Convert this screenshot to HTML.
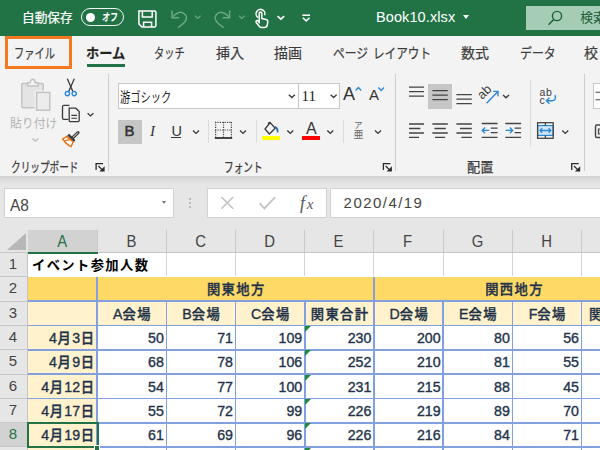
<!DOCTYPE html>
<html lang="ja">
<head>
<meta charset="utf-8">
<title>Book10.xlsx</title>
<style>
html,body{margin:0;padding:0;}
body{width:600px;height:450px;overflow:hidden;position:relative;background:#e6e6e6;
  font-family:"Liberation Sans","Noto Sans CJK JP",sans-serif;color:#444;}
.a{position:absolute;}
.t{position:absolute;white-space:nowrap;line-height:1;transform-origin:0 0;}
.k{display:inline-block;transform-origin:0 50%;}
#title{left:0;top:0;width:600px;height:35.6px;background:#217346;}
#ribbon{left:0;top:35.6px;width:600px;height:140.4px;background:#f3f3f3;}
#shadow{left:0;top:176px;width:600px;height:8px;background:linear-gradient(#cfcfcf,#dcdcdc 40%,#e6e6e6);}
.tab{font-size:14px;color:#3c3c3c;top:46.3px;-webkit-text-stroke:.2px #3c3c3c;}
.gl{font-size:13.2px;color:#3c3c3c;top:161px;-webkit-text-stroke:.25px #3c3c3c;}
.vsep{position:absolute;width:1.2px;background:#cdcdcd;}
.box{position:absolute;background:#fff;border:1px solid #c6c6c6;box-sizing:border-box;}
svg{position:absolute;overflow:visible;}
/* grid */
#grid{left:0;top:229px;width:600px;height:221px;background:#fff;}
.ch{position:absolute;top:229px;height:24px;transform:scaleX(.92);transform-origin:50% 50%;font-size:16.2px;color:#444;text-align:center;line-height:24px;box-sizing:border-box;}
.rh{position:absolute;left:0;width:28px;height:24px;font-size:15px;color:#444;text-align:center;line-height:24px;box-sizing:border-box;padding-right:2px;}
.c{position:absolute;height:24px;box-sizing:border-box;font-size:13.3px;letter-spacing:1.37px;line-height:27.4px;color:#22324a;font-weight:500;-webkit-text-stroke:0.35px #22324a;white-space:nowrap;}
.d{letter-spacing:0;font-size:14.2px;}
.dt .d{margin-right:.6px;}
.n{text-align:right;padding-right:2px;}
.m{text-align:center;padding-left:2.6px;}
.hl{position:absolute;height:1.6px;background:#829fe0;margin-top:-.15px;}
.vl{position:absolute;width:1.6px;background:#829fe0;margin-left:-.15px;}
.gh{position:absolute;height:1px;background:#d4d4d4;}
.gv{position:absolute;width:1px;background:#d4d4d4;}
.tri{position:absolute;width:0;height:0;border-top:6px solid #1e8a3c;border-right:6px solid transparent;}
</style>
</head>
<body>
<div id="title" class="a"></div>
<div id="ribbon" class="a"></div>
<div id="shadow" class="a"></div>

<!-- TITLE BAR -->
<div class="t" style="left:22px;top:11.5px;font-size:12.7px;color:#fff;-webkit-text-stroke:.2px #fff;">自動保存</div>
<div class="a" style="left:81px;top:7.8px;width:40.8px;height:15.8px;border:1.2px solid #f0f6f2;border-radius:10px;box-sizing:content-box;"></div>
<div class="a" style="left:86px;top:12.5px;width:9.2px;height:9.2px;border-radius:50%;background:#fff;"></div>
<div class="t" style="left:102px;top:11.7px;font-size:11px;color:#fff;font-weight:700;"><span class="k" style="transform:scaleX(.72) skewX(-8deg)">オフ</span></div>
<div class="t" style="left:376px;top:10px;font-size:14.5px;color:#fff;letter-spacing:.1px;">Book10.xlsx</div>
<div class="a" style="left:463px;top:15px;width:0;height:0;border-left:3.5px solid transparent;border-right:3.5px solid transparent;border-top:4px solid #fff;"></div>
<div class="a" style="left:525.8px;top:5.7px;width:75px;height:24.8px;background:#a5cdb5;"></div>
<div class="t" style="left:580.3px;top:11.6px;font-size:12.8px;color:#1d5c38;">検索</div>

<!-- TABS -->
<div class="a" style="left:5px;top:36px;width:61px;height:27px;border:3px solid #f47920;"></div>
<div class="t tab" style="left:14px;"><span class="k" style="transform:scaleX(.73)">ファイル</span></div>
<div class="t tab" style="left:86px;font-weight:700;color:#222;"><span class="k" style="transform:scaleX(.945)">ホーム</span></div>
<div class="a" style="left:87px;top:63.5px;width:38px;height:3px;background:#217346;"></div>
<div class="t tab" style="left:154px;"><span class="k" style="transform:scaleX(.73)">タッチ</span></div>
<div class="t tab" style="left:216px;">挿入</div>
<div class="t tab" style="left:274px;">描画</div>
<div class="t tab" style="left:333px;"><span class="k" style="transform:scaleX(.84)">ページ</span></div>
<div class="t tab" style="left:373px;"><span class="k" style="transform:scaleX(.83)">レイアウト</span></div>
<div class="t tab" style="left:461px;">数式</div>
<div class="t tab" style="left:520px;"><span class="k" style="transform:scaleX(.85)">データ</span></div>
<div class="t tab" style="left:584px;width:14.2px;overflow:hidden;">校閲</div>

<!-- RIBBON GROUP LABELS -->
<div class="t gl" style="left:11px;"><span class="k" style="transform:scaleX(.73)">クリップボード</span></div>
<div class="t gl" style="left:224px;"><span class="k" style="transform:scaleX(.73)">フォント</span></div>
<div class="t gl" style="left:467px;">配置</div>
<div class="vsep" style="left:108px;top:74px;height:97px;"></div>
<div class="vsep" style="left:395px;top:74px;height:97px;"></div>
<div class="vsep" style="left:584px;top:74px;height:97px;"></div>
<div class="vsep" style="left:208px;top:120px;height:23px;background:#dcdcdc;"></div>
<div class="vsep" style="left:256px;top:120px;height:23px;background:#dcdcdc;"></div>
<div class="vsep" style="left:343px;top:120px;height:23px;background:#dcdcdc;"></div>
<div class="vsep" style="left:530px;top:80px;height:67px;background:#dcdcdc;"></div>

<!-- CLIPBOARD -->
<div class="t" style="left:10px;top:117.8px;font-size:12.5px;color:#b4b4b4;"><span class="k" style="transform:scaleX(.945)">貼り付け</span></div>

<!-- FONT GROUP -->
<div class="box" style="left:118px;top:83px;width:181px;height:26px;"></div>
<div class="box" style="left:298px;top:83px;width:42px;height:26px;"></div>
<div class="t" style="left:120px;top:90.5px;font-size:13.5px;color:#222;"><span class="k" style="transform:scaleX(.76)">游ゴシック</span></div>
<div class="t" style="left:301.5px;top:89px;font-size:15px;color:#222;font-family:'Liberation Serif',serif;">11</div>
<div class="a" style="left:118px;top:120px;width:24px;height:24px;background:#c6c6c6;"></div>
<div class="t" style="left:124.6px;top:122.5px;font-size:15px;color:#333;-webkit-text-stroke:.5px #333;">B</div>
<div class="t" style="left:150px;top:124px;font-size:15px;color:#333;font-style:italic;font-family:'Liberation Serif',serif;">I</div>
<div class="t" style="left:171.5px;top:124px;font-size:14.5px;color:#333;">U</div>
<div class="a" style="left:171px;top:137px;width:10px;height:1.3px;background:#333;"></div>
<div class="t" style="left:343px;top:85px;font-size:18px;color:#333;">A</div>
<div class="t" style="left:369px;top:87.3px;font-size:15px;color:#333;">A</div>
<div class="t" style="left:306px;top:120.5px;font-size:16px;color:#333;">A</div>
<div class="a" style="left:302px;top:136px;width:18px;height:4px;background:#f00;"></div>
<div class="a" style="left:262px;top:136px;width:18px;height:4px;background:#ff0;"></div>
<div class="t" style="left:354px;top:121px;font-size:8.5px;color:#666;">ア</div>
<div class="t" style="left:353.5px;top:130px;font-size:10px;color:#666;">亜</div>

<!-- ALIGN GROUP -->
<div class="a" style="left:428px;top:84px;width:24px;height:25px;background:#c6c6c6;"></div>
<div class="box" style="left:593px;top:83px;width:20px;height:26px;"></div>

<!-- FORMULA BAR -->
<div class="box" style="left:4px;top:187.6px;width:170px;height:30.6px;border-color:#d2d2d2;"></div>
<div class="t" style="left:10px;top:197px;font-size:16.5px;color:#444;"><span class="k" style="transform:scaleX(.94)">A8</span></div>
<div class="a" style="left:161.5px;top:201px;width:0;height:0;border-left:2.5px solid transparent;border-right:2.5px solid transparent;border-top:3px solid #777;"></div>
<div class="a" style="left:188.5px;top:198px;width:2px;height:2px;background:#bbb;box-shadow:0 4px 0 #bbb,0 8px 0 #bbb;"></div>
<div class="box" style="left:207px;top:187.6px;width:120px;height:30.6px;border-color:#d2d2d2;"></div>
<div class="box" style="left:330px;top:187.6px;width:280px;height:30.6px;border-color:#d2d2d2;"></div>
<div class="t" style="left:343.6px;top:195px;font-size:15px;color:#444;letter-spacing:1.45px;">2020/4/19</div>
<div class="t" style="left:300px;top:193.5px;font-size:18px;color:#555;font-style:italic;font-family:'Liberation Serif',serif;letter-spacing:1.8px;">f<span style="font-size:15px;">x</span></div>

<!-- GRID -->
<svg style="left:0;top:0" width="600" height="450" viewBox="0 0 600 450" fill="none" stroke-linecap="butt" stroke-linejoin="miter">
<!-- title bar icons -->
<g stroke="#fff" stroke-width="1.4">
  <path d="M138.9 10.9h15.7q1.3 0 1.3 1.3v13.4q0 1.3-1.3 1.3h-12.8l-2.9-2.9z" stroke-width="1.5"/>
  <path d="M142.4 10.9v6.2h9.8v-6.2" stroke-width="1.5"/>
  <path d="M143.6 26.9v-4.7h8v4.7" stroke-width="1.5"/>
</g>
<g stroke="#6ba686" stroke-width="1.5">
  <path d="M172 10.5v7.2h7.2"/>
  <path d="M172.6 17.2c3-4.6 8.4-6.4 12-3.2c3.4 3.2 1.6 7.4-2 10.2l-4.6 3.4"/>
  <path d="M229.6 10.5v7.2h-7.2"/>
  <path d="M229 17.2c-3-4.6-8.4-6.4-12-3.2c-3.4 3.2-1.6 7.4 2 10.2l4.6 3.4"/>
  <path d="M195 15.8l2.8 2.6l2.8-2.6" stroke-width="1.3"/>
  <path d="M239 15.8l2.8 2.6l2.8-2.6" stroke-width="1.3"/>
</g>
<g stroke="#fff" stroke-width="1.4">
  <path d="M258.3 17.6A4.4 4.4 0 1 1 264.6 15.3" stroke-width="1.5"/>
  <path d="M259.2 22.8V13.2a1.3 1.3 0 0 1 2.6 0V18.6l4.2.9q2 .5 1.8 2.4l-.5 3q-.4 2.6-3 2.6h-2.6q-1.6 0-2.5-1.2l-3-3.8q-.7-1.1.3-1.8q1-.5 1.8.4z" stroke-width="1.5" stroke-linejoin="round"/>
  <path d="M277.6 16.2l3.3 3l3.3-3" stroke-width="1.6"/>
  <path d="M302.3 15.2h7.8" stroke-width="1.5"/>
  <path d="M302.8 17.8l3.4 3.1l3.4-3.1" stroke-width="1.5"/>
</g>
<g stroke="#1d5c38" stroke-width="1.4">
  <circle cx="557" cy="16" r="4.6"/>
  <path d="M553.7 19.4l-5.2 5.4"/>
</g>

<!-- paste -->
<g stroke="#c3c3c3" stroke-width="1.5">
  <rect x="21.8" y="83.6" width="21.4" height="24.2" rx="1" fill="#e4e4e4"/>
  <path d="M27.5 86v-3.2h2.6q.4-3.6 2.6-3.6q2.2 0 2.6 3.6h2.6v3.2z" fill="#f3f3f3"/>
  <rect x="36" y="92" width="14.2" height="18.6" fill="#ececec" stroke="#f3f3f3" stroke-width="3"/>
  <rect x="36.6" y="92.4" width="13.2" height="17.8" fill="#ececec"/>
</g>
<path d="M32.4 138.4l3 2.8l3-2.8" stroke="#bdbdbd" stroke-width="1.3"/>
<!-- scissors -->
<g stroke="#3b3b3b" stroke-width="1.3">
  <path d="M67.3 78.8l5.6 12.6"/>
  <path d="M74.3 78.8l-5.6 12.6"/>
</g>
<g stroke="#2b88d8" stroke-width="1.4" fill="#fff">
  <circle cx="67.4" cy="93.6" r="2.1"/>
  <circle cx="74.2" cy="93.6" r="2.1"/>
</g>
<!-- copy -->
<g stroke="#3b3b3b" stroke-width="1.3">
  <path d="M68.4 119.4h-4.6q-1.3 0-1.3-1.3v-11.4q0-1.3 1.3-1.3h5.6"/>
  <path d="M69.2 108.2h6.6l3.4 3.4v9q0 1-1 1h-8q-1 0-1-1z" fill="#f3f3f3"/>
  <path d="M71.4 115.4h5.6M71.4 118.2h5.6" stroke-width="1.1"/>
  <path d="M87.6 113.2l2.9 2.7l2.9-2.7" stroke-width="1.4"/>
</g>
<!-- format painter -->
<g>
  <path d="M72.6 137.8l5.4-5.2" stroke="#3b3b3b" stroke-width="3.2" stroke-linecap="round"/>
  <path d="M73 137.4l4.6-4.4" stroke="#f3f3f3" stroke-width="1" stroke-linecap="round"/>
  <path d="M68.2 134.6l6.4 6.6" stroke="#3b3b3b" stroke-width="2.6"/>
  <path d="M66.8 136.4l-4 2.6q3.6 5.6 8.2 7.6l2.2-4.6z" stroke="#e8700a" stroke-width="1.4" fill="#fff"/>
  <path d="M64.6 140.8l6.4-1.6" stroke="#e8700a" stroke-width="1.2"/>
</g>
<!-- launchers -->
<g stroke="#2a2a2a" stroke-width="1.3">
  <path d="M96.1 170v-6.4h7M98.4 166l4.6 4.6"/>
  <path d="M383.4 170v-6.4h7M385.7 166l4.6 4.6"/>
  <path d="M571.7 170v-6.4h7M574 166l4.6 4.6"/>
</g>
<g fill="#2a2a2a" stroke="none">
  <path d="M104.6 166.3v5.3h-5.3z"/>
  <path d="M391.9 166.3v5.3h-5.3z"/>
  <path d="M580.2 166.3v5.3h-5.3z"/>
</g>
<!-- chevrons in ribbon -->
<g stroke="#3b3b3b" stroke-width="1.4">
  <path d="M288.8 94.8l3 2.8l3-2.8"/>
  <path d="M330.6 94.8l3 2.8l3-2.8"/>
  <path d="M193 130.6l3 2.8l3-2.8"/>
  <path d="M240 130.6l3 2.8l3-2.8"/>
  <path d="M287.3 130.6l3 2.8l3-2.8"/>
  <path d="M327.3 130.6l3 2.8l3-2.8"/>
  <path d="M375 130.6l3 2.8l3-2.8"/>
  <path d="M503 95l3 2.8l3-2.8"/>
  <path d="M562.3 130.6l3 2.8l3-2.8"/>
</g>
<!-- A^ Av carets -->
<g stroke="#2b88d8" stroke-width="1.4">
  <path d="M355.6 90.4l2.8-2.8l2.8 2.8"/>
  <path d="M378.4 87.6l2.8 2.8l2.8-2.8"/>
</g>
<!-- border icon -->
<g stroke="#444" stroke-width="1.2" stroke-dasharray="1.2 1.2">
  <path d="M215 122.3h17"/>
  <path d="M215.6 122v15.6M231.4 122v15.6M223.5 122v15.6"/>
  <path d="M215 130h17"/>
</g>
<path d="M214.8 138h17.4" stroke="#333" stroke-width="1.8"/>
<!-- bucket -->
<g stroke-width="1.3">
  <path d="M270.2 122.6l5 5.6l-5.8 5.8l-4.4-5z" stroke="#3b3b3b" fill="#f3f3f3" stroke-linejoin="round"/>
  <path d="M268.6 124.6q-.6-2.2 1.6-2.2" stroke="#3b3b3b"/>
  <path d="M274.8 126.8q3 .6 2.8 5.6" stroke="#1f6fbf" stroke-width="1.8"/>
</g>
<!-- alignment icons -->
<g stroke="#444" stroke-width="1.3">
  <path d="M409 87.2h15M409 91.7h15M409 96.2h15"/>
  <path d="M432.4 90.7h15.4M432.4 95.2h15.4M432.4 99.7h15.4"/>
  <path d="M456.4 94.7h15.4M456.4 99.2h15.4M456.4 103.7h15.4"/>
  <path d="M409 124h15M409 128.5h11.4M409 133h15M409 137.4h10"/>
  <path d="M432.4 124h15.4M434.4 128.5h11.4M432.4 133h15.4M435 137.4h10.2"/>
  <path d="M456.4 124h15.4M460 128.5h11.8M456.4 133h15.4M461.4 137.4h10.4"/>
  <path d="M481.7 123.5h15.8M490.8 128.1h6.7M490.8 132.7h6.7M481.7 137.3h15.8"/>
  <path d="M505.3 123.5h15.8M514.6 128.1h6.5M514.6 132.7h6.5M505.3 137.3h15.8"/>
</g>
<g stroke="#2b88d8" stroke-width="1.4">
  <path d="M482.2 130.4h7M485 127.6l-2.8 2.8l2.8 2.8"/>
  <path d="M505.6 130.4h7M509.8 127.6l2.8 2.8l-2.8 2.8"/>
  <path d="M486.6 103.2l11-11.4M493.2 91.4h4.8v4.8"/>
  <path d="M555 95q1.6 5.8-3.4 5.8h-5.2M549.4 97.8l-3 3l3 3"/>
</g>
<text x="0" y="0" transform="translate(482.3 100.1) rotate(-45)" font-family="Liberation Sans, sans-serif" font-size="12.8" fill="#3b3b3b" stroke="none">ab</text>
<text x="539.6" y="96" font-family="Liberation Sans, sans-serif" font-size="10.5" fill="#3b3b3b" stroke="none" letter-spacing=".6">ab</text>
<text x="539.6" y="104" font-family="Liberation Sans, sans-serif" font-size="10.5" fill="#3b3b3b" stroke="none">c</text>
<!-- merge -->
<rect x="537.6" y="125.6" width="15.6" height="9.8" fill="#cfe6f8" stroke="#2b88d8" stroke-width="1.2"/>
<g stroke="#444" stroke-width="1.3">
  <rect x="537.6" y="122.7" width="15.6" height="15.6"/>
  <path d="M545.4 122.7v3M545.4 135.4v3"/>
</g>
<path d="M540 130.5h10.8M542.2 128.3l-2.2 2.2l2.2 2.2M548.6 128.3l2.2 2.2l-2.2 2.2" stroke="#2b88d8" stroke-width="1.3"/>
<!-- right cut-off group -->
<path d="M595.5 92.2h5M595.5 99.8h5" stroke="#444" stroke-width="1.1"/>
<path d="M600 125h-3q-1.5 0-1.5 1.5v9.5q0 1.5 1.5 1.5h3" stroke="#444" stroke-width="1.4"/>
<path d="M598.5 129h2v5h-2z" stroke="#444" stroke-width="1.2"/>
<!-- formula bar X and check -->
<path d="M221.4 197l11.8 11.8M233.2 197l-11.8 11.8" stroke="#c2c2c2" stroke-width="1.5"/>
<path d="M259.6 203.4l4.8 5l10.8-11.2" stroke="#c2c2c2" stroke-width="1.7"/>
</svg>

<div class="a" style="left:0;top:229px;width:600px;height:221px;background:#fff;"></div>
<div class="a" style="left:0;top:229px;width:600px;height:24px;background:#e6e6e6;"></div>
<div class="a" style="left:0;top:252px;width:600px;height:1px;background:#c6c6c6;"></div>
<svg style="left:7px;top:233px" width="20" height="18" viewBox="0 0 20 18"><path d="M19 0V17H0Z" fill="#b7b7b7"/></svg>
<div class="a" style="left:28px;top:230.3px;width:68.6px;height:21.7px;background:#d2d2d2;"></div>
<div class="a" style="left:28px;top:252px;width:69.6px;height:2px;background:#217346;"></div>
<div class="t ch" style="left:28px;width:68.6px;color:#217346;">A</div>
<div class="a" style="left:96.6px;top:230px;width:1px;height:22px;background:#c9c9c9;"></div>
<div class="t ch" style="left:96.6px;width:69.2px;">B</div>
<div class="a" style="left:165.8px;top:230px;width:1px;height:22px;background:#c9c9c9;"></div>
<div class="t ch" style="left:165.8px;width:69.2px;">C</div>
<div class="a" style="left:235.0px;top:230px;width:1px;height:22px;background:#c9c9c9;"></div>
<div class="t ch" style="left:235.0px;width:69.2px;">D</div>
<div class="a" style="left:304.2px;top:230px;width:1px;height:22px;background:#c9c9c9;"></div>
<div class="t ch" style="left:304.2px;width:69.2px;">E</div>
<div class="a" style="left:373.4px;top:230px;width:1px;height:22px;background:#c9c9c9;"></div>
<div class="t ch" style="left:373.4px;width:69.2px;">F</div>
<div class="a" style="left:442.6px;top:230px;width:1px;height:22px;background:#c9c9c9;"></div>
<div class="t ch" style="left:442.6px;width:69.2px;">G</div>
<div class="a" style="left:511.8px;top:230px;width:1px;height:22px;background:#c9c9c9;"></div>
<div class="t ch" style="left:511.8px;width:69.2px;">H</div>
<div class="a" style="left:581.0px;top:230px;width:1px;height:22px;background:#c9c9c9;"></div>
<div class="a" style="left:0;top:253px;width:28px;height:23.2px;background:#e6e6e6;"></div>
<div class="t rh" style="top:253px;height:23.2px;line-height:22.2px;color:#444;">1</div>
<div class="a" style="left:0;top:276.2px;width:28px;height:24.4px;background:#e6e6e6;"></div>
<div class="t rh" style="top:276.2px;height:24.4px;line-height:23.4px;color:#444;">2</div>
<div class="a" style="left:0;top:300.6px;width:28px;height:24.3px;background:#e6e6e6;"></div>
<div class="t rh" style="top:300.6px;height:24.3px;line-height:23.3px;color:#444;">3</div>
<div class="a" style="left:0;top:324.9px;width:28px;height:24.3px;background:#e6e6e6;"></div>
<div class="t rh" style="top:324.9px;height:24.3px;line-height:23.3px;color:#444;">4</div>
<div class="a" style="left:0;top:349.2px;width:28px;height:24.4px;background:#e6e6e6;"></div>
<div class="t rh" style="top:349.2px;height:24.4px;line-height:23.4px;color:#444;">5</div>
<div class="a" style="left:0;top:373.6px;width:28px;height:24.3px;background:#e6e6e6;"></div>
<div class="t rh" style="top:373.6px;height:24.3px;line-height:23.3px;color:#444;">6</div>
<div class="a" style="left:0;top:397.9px;width:28px;height:24.3px;background:#e6e6e6;"></div>
<div class="t rh" style="top:397.9px;height:24.3px;line-height:23.3px;color:#444;">7</div>
<div class="a" style="left:0;top:422.2px;width:28px;height:24.3px;background:#d2d2d2;"></div>
<div class="t rh" style="top:422.2px;height:24.3px;line-height:23.3px;color:#217346;">8</div>
<div class="a" style="left:0;top:446.5px;width:28px;height:24.4px;background:#e6e6e6;"></div>
<div class="a" style="left:0;top:276.1px;width:28px;height:1px;background:#c6c6c6;"></div>
<div class="a" style="left:0;top:300.5px;width:28px;height:1px;background:#c6c6c6;"></div>
<div class="a" style="left:0;top:324.8px;width:28px;height:1px;background:#c6c6c6;"></div>
<div class="a" style="left:0;top:349.1px;width:28px;height:1px;background:#c6c6c6;"></div>
<div class="a" style="left:0;top:373.5px;width:28px;height:1px;background:#c6c6c6;"></div>
<div class="a" style="left:0;top:397.8px;width:28px;height:1px;background:#c6c6c6;"></div>
<div class="a" style="left:0;top:422.1px;width:28px;height:1px;background:#c6c6c6;"></div>
<div class="a" style="left:0;top:446.4px;width:28px;height:1px;background:#c6c6c6;"></div>
<div class="a" style="left:0;top:470.8px;width:28px;height:1px;background:#c6c6c6;"></div>
<div class="a" style="left:27.3px;top:253px;width:1px;height:197px;background:#c2c2c2;"></div>
<div class="a" style="left:28.3px;top:277.3px;width:572px;height:23.3px;background:#ffd966;"></div>
<div class="a" style="left:28.3px;top:300.6px;width:572px;height:24.3px;background:#fff2cc;"></div>
<div class="a" style="left:28.3px;top:324.9px;width:68.6px;height:125.1px;background:#fff2cc;"></div>
<div class="gv" style="left:165.8px;top:253px;height:23.2px;"></div>
<div class="gv" style="left:235.0px;top:253px;height:23.2px;"></div>
<div class="gv" style="left:304.2px;top:253px;height:23.2px;"></div>
<div class="gv" style="left:373.4px;top:253px;height:23.2px;"></div>
<div class="gv" style="left:442.6px;top:253px;height:23.2px;"></div>
<div class="gv" style="left:511.8px;top:253px;height:23.2px;"></div>
<div class="gv" style="left:581.0px;top:253px;height:23.2px;"></div>
<div class="hl" style="left:28px;top:300.6px;width:572px;"></div>
<div class="hl" style="left:28px;top:324.9px;width:572px;"></div>
<div class="hl" style="left:28px;top:349.2px;width:572px;"></div>
<div class="hl" style="left:28px;top:373.6px;width:572px;"></div>
<div class="hl" style="left:28px;top:397.9px;width:572px;"></div>
<div class="hl" style="left:28px;top:422.2px;width:572px;"></div>
<div class="hl" style="left:28px;top:446.5px;width:572px;"></div>
<div class="vl" style="left:96.6px;top:277.3px;height:173.8px;"></div>
<div class="vl" style="left:373.4px;top:277.3px;height:173.8px;"></div>
<div class="vl" style="left:165.8px;top:300.6px;height:149.4px;"></div>
<div class="vl" style="left:235.0px;top:300.6px;height:149.4px;"></div>
<div class="vl" style="left:304.2px;top:300.6px;height:149.4px;"></div>
<div class="vl" style="left:442.6px;top:300.6px;height:149.4px;"></div>
<div class="vl" style="left:511.8px;top:300.6px;height:149.4px;"></div>
<div class="vl" style="left:581.0px;top:300.6px;height:149.4px;"></div>
<div class="c" style="left:32px;top:253px;font-weight:700;color:#000;-webkit-text-stroke:0;line-height:25.6px;">イベント参加人数</div>
<div class="c m" style="left:96.6px;top:276.2px;width:276.8px;">関東地方</div>
<div class="c m" style="left:373.4px;top:276.2px;width:279.6px;">関西地方</div>
<div class="c m" style="left:96.6px;top:300.6px;width:69.2px;height:24.3px;"><span class="d">A</span>会場</div>
<div class="c m" style="left:165.8px;top:300.6px;width:69.2px;height:24.3px;"><span class="d">B</span>会場</div>
<div class="c m" style="left:235.0px;top:300.6px;width:69.2px;height:24.3px;"><span class="d">C</span>会場</div>
<div class="c m" style="left:304.2px;top:300.6px;width:69.2px;height:24.3px;">関東合計</div>
<div class="c m" style="left:373.4px;top:300.6px;width:69.2px;height:24.3px;"><span class="d">D</span>会場</div>
<div class="c m" style="left:442.6px;top:300.6px;width:69.2px;height:24.3px;"><span class="d">E</span>会場</div>
<div class="c m" style="left:511.8px;top:300.6px;width:69.2px;height:24.3px;"><span class="d">F</span>会場</div>
<div class="c m" style="left:581.0px;top:300.6px;width:72.0px;height:24.3px;">関西合計</div>
<div class="c n dt" style="left:28px;top:324.9px;width:68.6px;height:24.3px;padding-right:1.2px;"><span class="d">4</span>月<span class="d">3</span>日</div>
<div class="c n" style="left:96.6px;top:324.9px;width:69.2px;height:24.3px;"><span class="d">50</span></div>
<div class="c n" style="left:165.8px;top:324.9px;width:69.2px;height:24.3px;"><span class="d">71</span></div>
<div class="c n" style="left:235.0px;top:324.9px;width:69.2px;height:24.3px;"><span class="d">109</span></div>
<div class="c n" style="left:304.2px;top:324.9px;width:69.2px;height:24.3px;"><span class="d">230</span></div>
<div class="c n" style="left:373.4px;top:324.9px;width:69.2px;height:24.3px;"><span class="d">200</span></div>
<div class="c n" style="left:442.6px;top:324.9px;width:69.2px;height:24.3px;"><span class="d">80</span></div>
<div class="c n" style="left:511.8px;top:324.9px;width:69.2px;height:24.3px;"><span class="d">56</span></div>
<div class="tri" style="left:305.2px;top:325.9px;"></div>
<div class="c n dt" style="left:28px;top:349.2px;width:68.6px;height:24.4px;padding-right:1.2px;"><span class="d">4</span>月<span class="d">9</span>日</div>
<div class="c n" style="left:96.6px;top:349.2px;width:69.2px;height:24.4px;"><span class="d">68</span></div>
<div class="c n" style="left:165.8px;top:349.2px;width:69.2px;height:24.4px;"><span class="d">78</span></div>
<div class="c n" style="left:235.0px;top:349.2px;width:69.2px;height:24.4px;"><span class="d">106</span></div>
<div class="c n" style="left:304.2px;top:349.2px;width:69.2px;height:24.4px;"><span class="d">252</span></div>
<div class="c n" style="left:373.4px;top:349.2px;width:69.2px;height:24.4px;"><span class="d">210</span></div>
<div class="c n" style="left:442.6px;top:349.2px;width:69.2px;height:24.4px;"><span class="d">81</span></div>
<div class="c n" style="left:511.8px;top:349.2px;width:69.2px;height:24.4px;"><span class="d">55</span></div>
<div class="tri" style="left:305.2px;top:350.2px;"></div>
<div class="c n dt" style="left:28px;top:373.6px;width:68.6px;height:24.3px;padding-right:1.2px;"><span class="d">4</span>月<span class="d">12</span>日</div>
<div class="c n" style="left:96.6px;top:373.6px;width:69.2px;height:24.3px;"><span class="d">54</span></div>
<div class="c n" style="left:165.8px;top:373.6px;width:69.2px;height:24.3px;"><span class="d">77</span></div>
<div class="c n" style="left:235.0px;top:373.6px;width:69.2px;height:24.3px;"><span class="d">100</span></div>
<div class="c n" style="left:304.2px;top:373.6px;width:69.2px;height:24.3px;"><span class="d">231</span></div>
<div class="c n" style="left:373.4px;top:373.6px;width:69.2px;height:24.3px;"><span class="d">215</span></div>
<div class="c n" style="left:442.6px;top:373.6px;width:69.2px;height:24.3px;"><span class="d">88</span></div>
<div class="c n" style="left:511.8px;top:373.6px;width:69.2px;height:24.3px;"><span class="d">45</span></div>
<div class="tri" style="left:305.2px;top:374.6px;"></div>
<div class="c n dt" style="left:28px;top:397.9px;width:68.6px;height:24.3px;padding-right:1.2px;"><span class="d">4</span>月<span class="d">17</span>日</div>
<div class="c n" style="left:96.6px;top:397.9px;width:69.2px;height:24.3px;"><span class="d">55</span></div>
<div class="c n" style="left:165.8px;top:397.9px;width:69.2px;height:24.3px;"><span class="d">72</span></div>
<div class="c n" style="left:235.0px;top:397.9px;width:69.2px;height:24.3px;"><span class="d">99</span></div>
<div class="c n" style="left:304.2px;top:397.9px;width:69.2px;height:24.3px;"><span class="d">226</span></div>
<div class="c n" style="left:373.4px;top:397.9px;width:69.2px;height:24.3px;"><span class="d">219</span></div>
<div class="c n" style="left:442.6px;top:397.9px;width:69.2px;height:24.3px;"><span class="d">89</span></div>
<div class="c n" style="left:511.8px;top:397.9px;width:69.2px;height:24.3px;"><span class="d">70</span></div>
<div class="tri" style="left:305.2px;top:398.9px;"></div>
<div class="c n dt" style="left:28px;top:422.2px;width:68.6px;height:24.3px;padding-right:1.2px;"><span class="d">4</span>月<span class="d">19</span>日</div>
<div class="c n" style="left:96.6px;top:422.2px;width:69.2px;height:24.3px;"><span class="d">61</span></div>
<div class="c n" style="left:165.8px;top:422.2px;width:69.2px;height:24.3px;"><span class="d">69</span></div>
<div class="c n" style="left:235.0px;top:422.2px;width:69.2px;height:24.3px;"><span class="d">96</span></div>
<div class="c n" style="left:304.2px;top:422.2px;width:69.2px;height:24.3px;"><span class="d">226</span></div>
<div class="c n" style="left:373.4px;top:422.2px;width:69.2px;height:24.3px;"><span class="d">216</span></div>
<div class="c n" style="left:442.6px;top:422.2px;width:69.2px;height:24.3px;"><span class="d">84</span></div>
<div class="c n" style="left:511.8px;top:422.2px;width:69.2px;height:24.3px;"><span class="d">71</span></div>
<div class="tri" style="left:305.2px;top:423.2px;"></div>
<div class="tri" style="left:305.2px;top:447.5px;"></div>
<div class="a" style="left:27px;top:421.7px;width:71.9px;height:26.3px;border:2px solid #217346;box-sizing:border-box;"></div>
<div class="a" style="left:94px;top:444.5px;width:6px;height:8px;background:#217346;border:1px solid #fff;box-sizing:border-box;"></div>
</body>
</html>
